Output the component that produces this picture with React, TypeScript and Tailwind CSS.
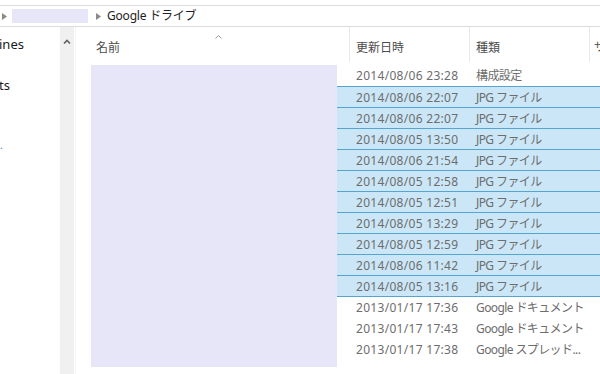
import React from 'react';

interface FileRow {
  date: string;
  kind: string;
  selected: boolean;
}

const rows: FileRow[] = [
  { date: '2014/08/06 23:28', kind: '構成設定', selected: false },
  { date: '2014/08/06 22:07', kind: 'JPG ファイル', selected: true },
  { date: '2014/08/06 22:07', kind: 'JPG ファイル', selected: true },
  { date: '2014/08/05 13:50', kind: 'JPG ファイル', selected: true },
  { date: '2014/08/06 21:54', kind: 'JPG ファイル', selected: true },
  { date: '2014/08/05 12:58', kind: 'JPG ファイル', selected: true },
  { date: '2014/08/05 12:51', kind: 'JPG ファイル', selected: true },
  { date: '2014/08/05 13:29', kind: 'JPG ファイル', selected: true },
  { date: '2014/08/05 12:59', kind: 'JPG ファイル', selected: true },
  { date: '2014/08/06 11:42', kind: 'JPG ファイル', selected: true },
  { date: '2014/08/05 13:16', kind: 'JPG ファイル', selected: true },
  { date: '2013/01/17 17:36', kind: 'Google ドキュメント', selected: false },
  { date: '2013/01/17 17:43', kind: 'Google ドキュメント', selected: false },
  { date: '2013/01/17 17:38', kind: 'Google スプレッド...', selected: false },
];

const Tri = () => (
  <svg width="5" height="7" viewBox="0 0 5 7" className="shrink-0">
    <path d="M0 0 L5 3.5 L0 7 Z" fill="#8a8a8a" />
  </svg>
);

const App: React.FC = () => {
  return (
    <div
      className="w-[600px] h-[374px] bg-white overflow-hidden text-[#1e1e1e]"
      style={{ fontFamily: '"Noto Sans", "Noto Sans CJK JP", sans-serif' }}
    >
      <div className="h-[5px]" />
      {/* address bar */}
      <div className="h-[22px] border-y border-[#dcdcdc] flex items-center">
        <div className="ml-[2px]">
          <Tri />
        </div>
        <div className="ml-[5px] w-[76px] h-[14px] bg-[#e6e6f8]" />
        <div className="ml-[8px]">
          <Tri />
        </div>
        <span className="ml-[6px] text-[12px] leading-none tracking-[-0.2px]">Google ドライブ</span>
      </div>

      <div className="flex h-[347px]">
        {/* nav pane */}
        <div className="w-[60px] shrink-0 text-[13px] leading-none text-[#1a1a1a]">
          <div className="mt-[11px] -ml-[1px]">ines</div>
          <div className="mt-[28px] -ml-[1px]">ts</div>
          <div className="mt-[48px] text-[10px] text-[#4a7fb8]">.</div>
        </div>
        {/* scrollbar */}
        <div className="w-[14px] shrink-0 bg-[#f0f0f0] flex justify-center pt-[12px]">
          <svg width="8" height="5" viewBox="0 0 8 5">
            <path d="M1 4.5 L4 1.5 L7 4.5" stroke="#606060" strokeWidth="1.6" fill="none" />
          </svg>
        </div>
        <div className="w-[1px] shrink-0" />
        <div className="w-[1px] shrink-0 bg-[#f4f4f4]" />

        {/* content */}
        <div className="flex-1 min-w-0 flex flex-col">
          {/* header */}
          <div className="h-[35px] flex text-[12px] text-[#4c4c4c]">
            <div className="w-[273px] shrink-0 relative pl-[20px] pt-[12px]">
              名前
              <svg
                width="7"
                height="4"
                viewBox="0 0 7 4"
                className="absolute left-[139px] top-[8px]"
              >
                <path d="M0.5 3.5 L3.5 0.5 L6.5 3.5" stroke="#9a9a9a" strokeWidth="1" fill="none" />
              </svg>
            </div>
            <div className="w-[120px] shrink-0 border-l border-[#e8e8e8] pl-[6px] pt-[12px]">更新日時</div>
            <div className="w-[120px] shrink-0 border-l border-[#e8e8e8] pl-[6px] pt-[12px]">種類</div>
            <div className="flex-1 border-l border-[#e8e8e8] pl-[4px] pt-[12px] overflow-hidden text-[11px]">サ</div>
          </div>
          <div className="h-[3px]" />
          {/* body */}
          <div className="flex flex-1">
            <div className="ml-[15px] shrink-0 w-[246px] h-[302px] bg-[#e6e6f8]" />
            <div className="flex-1 flex flex-col">
              {rows.map((r, i) => {
                const last = r.selected && !(rows[i + 1] && rows[i + 1].selected);
                return (
                  <div
                    key={i}
                    className={
                      'h-[21px] flex items-center pt-[1px] text-[12px] text-[#6d6d6d] whitespace-nowrap ' +
                      (r.selected
                        ? 'bg-[#cbe7f7] border-t border-[#56a5cf] ' + (last ? 'border-b h-[22px]' : '')
                        : '')
                    }
                  >
                    <span className="pl-[19px] w-[139px] shrink-0 tracking-[0.3px]">{r.date}</span>
                    <span className="tracking-[-0.6px]">{r.kind}</span>
                  </div>
                );
              })}
            </div>
          </div>
        </div>
      </div>
    </div>
  );
};

export default App;
